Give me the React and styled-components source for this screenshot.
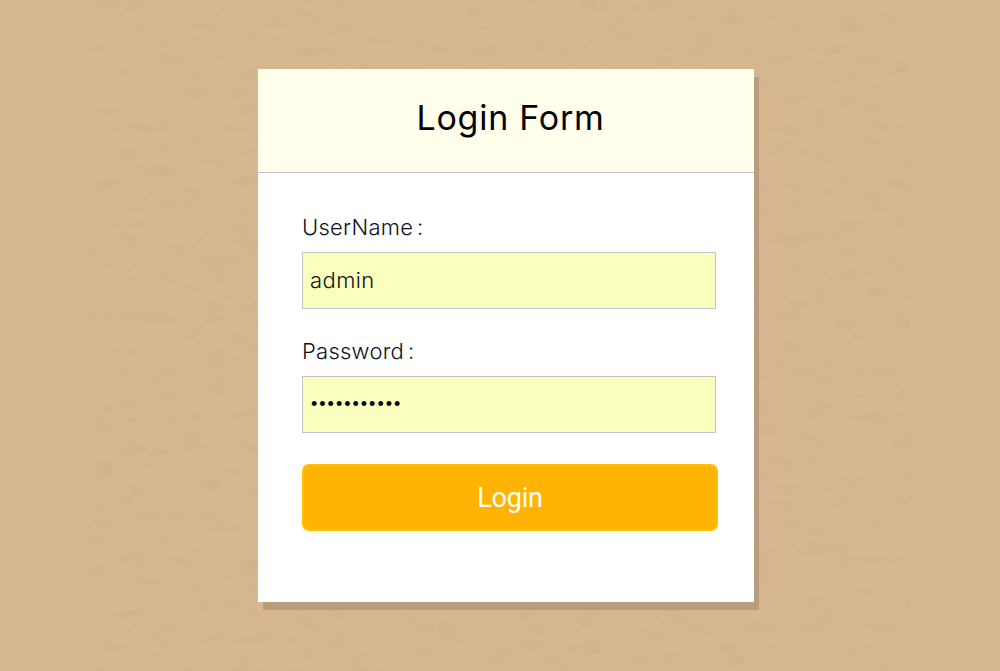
import React from "react";
import styled, { createGlobalStyle } from "styled-components";

const GlobalStyle = createGlobalStyle`
  * { box-sizing: border-box; }
  body { margin: 0; background: #d5b68f; }
`;

const Page = styled.main`
  position: relative;
  display: flex;
  justify-content: center;
  align-items: flex-start;
  height: 671px;
  padding: 69px 0 0 12px;
  overflow: hidden;
  background: #d5b68f;
  font-family: Inter, "Liberation Sans", sans-serif;
`;

const Paper = styled.svg`
  position: absolute;
  top: 0;
  left: 90px;
  width: 820px;
  height: 671px;
`;

const Card = styled.form`
  position: relative;
  display: flex;
  flex-direction: column;
  width: 496px;
  height: 533px;
  background: #fff;
  box-shadow: 5px 8px 0 #b99d7c;
`;

const Header = styled.header`
  height: 104px;
  padding-top: 25px;
  border-bottom: 1px solid #c3c1c5;
  background: #ffffeb;
`;

const Title = styled.h1`
  margin: 0 0 0 9px;
  color: #020208;
  font-size: 34px;
  font-weight: 400;
  line-height: 47px;
  letter-spacing: 0.75px;
  text-align: center;
`;

const Fields = styled.div`
  display: flex;
  flex-direction: column;
  padding: 40px 36px 0 44px;
`;

const Field = styled.label`
  display: flex;
  flex-direction: column;
  gap: 11px;
  width: 414px;
  height: 96px;
  margin-bottom: 28px;
  color: #101024;
  font-size: 22px;
  font-weight: 300;
  line-height: 28px;
  letter-spacing: 0.25px;
  word-spacing: -2.5px;
`;

const Input = styled.input`
  width: 414px;
  height: 57px;
  padding: 0 7px 1px;
  border: 1px solid #c5c2cb;
  border-radius: 0;
  outline: none;
  background: #faffbd;
  color: #101018;
  font-family: Inter, sans-serif;
  font-size: 22px;
  font-weight: 300;
  letter-spacing: 0.4px;
`;

const PasswordInput = styled(Input)`
  padding-left: 8px;
  color: #000;
  font-family: "Liberation Sans", sans-serif;
  font-size: 18px;
  letter-spacing: 2px;
`;

const Submit = styled.button`
  width: 416px;
  height: 67px;
  margin-top: 3px;
  padding: 0;
  border: 2px solid #ffc007;
  border-radius: 7px;
  background: #ffb403;
  color: #fffef8;
  font-family: Roboto, sans-serif;
  font-size: 27px;
  line-height: 60px;
  letter-spacing: -0.2px;
`;

export default function App() {
  return (
    <>
      <GlobalStyle />
      <Page>
        <Paper aria-hidden="true">
          <filter id="grain" x="0" y="0" width="100%" height="100%" colorInterpolationFilters="sRGB">
            <feTurbulence type="fractalNoise" baseFrequency="0.035 0.09" numOctaves="3" seed="8" />
            <feColorMatrix values="0 0 0 0 0.72  0 0 0 0 0.62  0 0 0 0 0.54  2.4 0 0 0 -1.2" />
          </filter>
          <rect width="820" height="671" fill="#d6b790" />
          <rect width="820" height="671" filter="url(#grain)" opacity="0.22" />
        </Paper>
        <Card onSubmit={(event) => event.preventDefault()}>
          <Header>
            <Title>Login Form</Title>
          </Header>
          <Fields>
            <Field>
              UserName :
              <Input type="text" defaultValue="admin" />
            </Field>
            <Field>
              Password :
              <PasswordInput type="password" defaultValue="12345678901" />
            </Field>
            <Submit type="submit">Login</Submit>
          </Fields>
        </Card>
      </Page>
    </>
  );
}
